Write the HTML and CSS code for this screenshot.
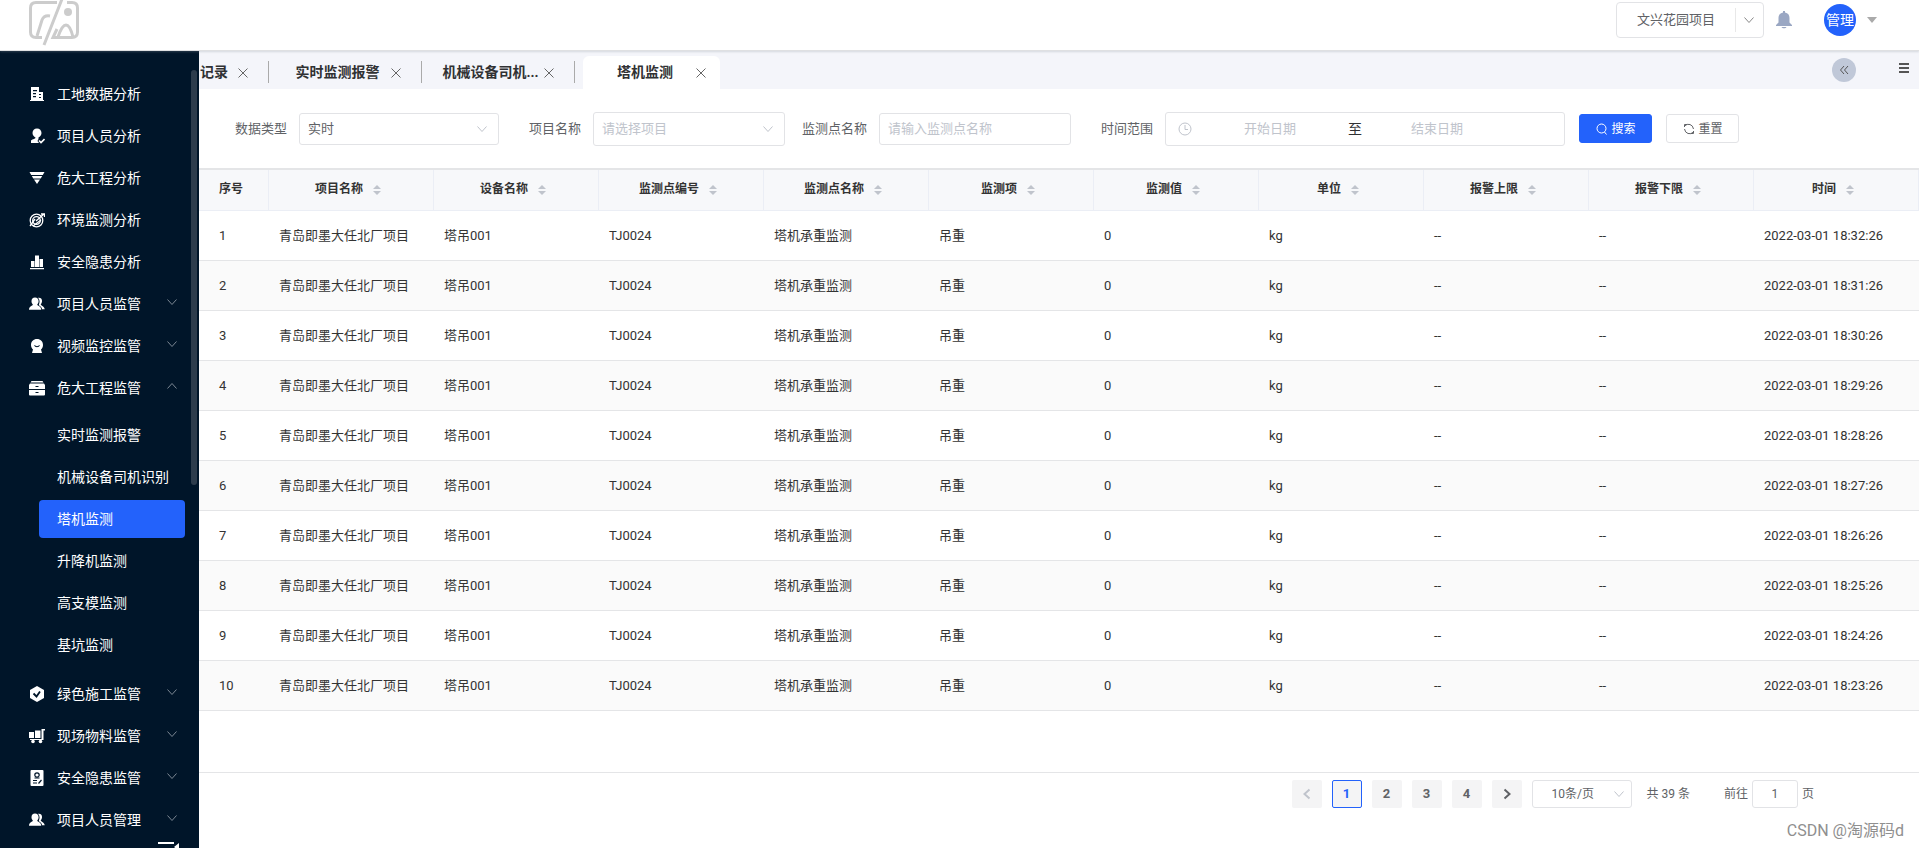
FILE: index.html
```html
<!DOCTYPE html>
<html lang="zh-CN">
<head>
<meta charset="utf-8">
<title>塔机监测</title>
<link rel="stylesheet" href="styles.css">
</head>
<body>
<svg class="sprite" aria-hidden="true">
  <symbol id="down" viewBox="0 0 12 12"><path d="M1.5 3.5 6 8.5 10.5 3.5" fill="none" stroke="currentColor"/></symbol>
  <symbol id="close" viewBox="0 0 12 12"><path d="M1.5 1.5 10.5 10.5M10.5 1.5 1.5 10.5" fill="none" stroke="currentColor"/></symbol>
  <symbol id="sort" viewBox="0 0 8 12"><path d="M0 5 4 1 8 5zM0 7 4 11 8 7z" fill="currentColor"/></symbol>
  <symbol id="people" viewBox="0 0 16 16"><path fill="currentColor" d="M9 1.8c2.8-.4 4.300 1.200 4 3.700-.1 1.200-.6 2-1.300 2.700.2 1.500 3.800 2 4 5.100h-2.600c-.3-2.100-1.500-3-2.900-3.800l-.3-1.100c1-1.700 1.100-4.700-.9-6.600zM6 1.500c2.200 0 3.700 1.500 3.600 3.800 0 1.400-.6 2.300-1.300 3 0 1.900 3.800 1.700 4 5.500H0c.1-3.800 3.800-3.600 3.800-5.500C3 7.600 2.500 6.700 2.500 5.300 2.400 3 3.800 1.500 6 1.500z"/></symbol>
</svg>
<header class="topbar">
  <svg class="logo" viewBox="0 0 50 46" fill="none" stroke="#ccc" stroke-width="3"><path d="M28 2.500H7Q1.500 2.500 1.500 8V32Q1.500 37.500 7 37.500H13M38 2.500H43Q48.500 2.500 48.500 8V32Q48.500 37.500 43 37.500H24L28 29M33 -1 15 45M8 36 13 20Q15 15 21 16M29 37Q33 25 37 25T44 37"/><circle cx="39" cy="12" r="4" fill="#ccc" stroke="none"/></svg>
  <div class="user-tools">
    <button class="project"><span>文兴花园项目</span><i></i><svg width="12" height="12"><use href="#down"/></svg></button>
    <button class="bell" aria-label="通知"><svg width="16" height="18" viewBox="0 0 16 18"><path fill="#9aa7c3" d="M7 0h2v1.500c3 .5 4.500 2.600 4.500 5.500v4.500L16 14v1H0v-1l2.500-2.500V7C2.500 4.100 4 2 7 1.500zM5.500 16h5c-.5 1.800-4.500 1.800-5 0z"/></svg></button>
    <button class="avatar">管理</button>
    <span class="caret"></span>
  </div>
</header>
<div class="shell">
  <aside class="sidebar">
    <nav>
      <a href="#"><svg viewBox="0 0 16 16"><path fill="currentColor" fill-rule="evenodd" d="M2 1h8v5h4v8h1v1H1v-1h1zM4 4v1.300h4V4zm0 3v1.300h3V7zm0 3v1.300h3V10zm6-2v1h2V8zm0 3v1h2v-1z"/></svg>工地数据分析</a>
      <a href="#"><svg viewBox="0 0 16 16"><path fill="currentColor" d="M8 .5c2.700 0 4.500 2 4.500 4.500C12.500 7 11 8.600 9.500 9.500V11l-1 2 1.500 2H2v-2c0-2 4.500-1.500 4.500-3.500C5 8.600 3.500 7 3.500 5 3.500 2.500 5.300.5 8 .5z"/><path fill="none" stroke="currentColor" stroke-width="1.600" d="m10 12.500 2 2 3.500-3.500"/></svg>项目人员分析</a>
      <a href="#"><svg viewBox="0 0 16 16"><path fill="currentColor" d="M.5 2h15l-1.700 3H2.200zM2.800 6h10.400l-1.500 2.500H4.300zM5 9.500h6L8 14z"/></svg>危大工程分析</a>
      <a href="#"><svg viewBox="0 0 16 16" fill="none" stroke="currentColor" stroke-width="1.300"><circle cx="7.500" cy="8.500" r="6.300"/><circle cx="7.500" cy="8.500" r="3.800"/><path d="M7 9 15 2M12 2h3.500v3M1 14 6 7M4 14l8-6"/></svg>环境监测分析</a>
      <a href="#"><svg viewBox="0 0 16 16"><path fill="currentColor" d="M2 7h3.500v6H2zM6 1.500h4V13H6zM10.500 5H14v8h-3.500zM1 14h14v1.200H1z"/></svg>安全隐患分析</a>
      <a href="#"><svg viewBox="0 0 16 16"><use href="#people"/></svg>项目人员监管<svg class="arrow"><use href="#down"/></svg></a>
      <a href="#"><svg viewBox="0 0 16 16"><path fill="currentColor" fill-rule="evenodd" d="M8 1c3.500 0 6 2.500 6 6 0 2-1 3.500-2 4.500l1 3.500H3l1-3.500C3 10.500 2 9 2 7c0-3.500 2.500-6 6-6zM5 7c1 3 5 3 6 0L8 8.300z"/></svg>视频监控监管<svg class="arrow"><use href="#down"/></svg></a>
      <a href="#"><svg viewBox="0 0 16 16"><path fill="currentColor" fill-rule="evenodd" d="M2.500 1h11l1 1.500h-13zM1 3.500h14l1 1.500v4H0V5zM6.500 6v1h3V6zM0 10h16v4.500q0 1-1 1H1q-1 0-1-1zm6.500 2v1h3v-1z"/></svg>危大工程监管<svg class="arrow up"><use href="#down"/></svg></a>
      <div class="submenu">
        <a href="#">实时监测报警</a><a href="#">机械设备司机识别</a><a href="#" class="active">塔机监测</a><a href="#">升降机监测</a><a href="#">高支模监测</a><a href="#">基坑监测</a>
      </div>
      <a href="#"><svg viewBox="0 0 16 16"><path fill="currentColor" d="m8 0 7 4v8l-7 4-7-4V4z"/><path fill="none" stroke="#001529" stroke-width="1.800" d="m4.500 7.500 3 3L11 5.500"/></svg>绿色施工监管<svg class="arrow"><use href="#down"/></svg></a>
      <a href="#"><svg viewBox="0 0 16 16"><path fill="currentColor" d="M0 4h5v6H0zM6 2.500h5.500V10H6zM12.500 1H16v1.500h-1.500V12H1v-1h11.500z"/><circle cx="4" cy="13.500" r="1.800" fill="currentColor"/><circle cx="11.500" cy="13.500" r="1.800" fill="currentColor"/></svg>现场物料监管<svg class="arrow"><use href="#down"/></svg></a>
      <a href="#"><svg viewBox="0 0 16 16"><rect x="1.500" width="13" height="16" rx="1" fill="currentColor"/><path fill="none" stroke="#001529" stroke-width="1.200" d="M4 10.500h4M4 13h4M9.500 13.500l3-3.500M5.500 8h5"/><circle cx="8" cy="5" r="2.200" fill="none" stroke="#001529" stroke-width="1.200"/></svg>安全隐患监管<svg class="arrow"><use href="#down"/></svg></a>
      <a href="#"><svg viewBox="0 0 16 16"><use href="#people"/></svg>项目人员管理<svg class="arrow"><use href="#down"/></svg></a>
    </nav>
    <button class="collapse" aria-label="收起菜单"><svg width="22" height="16" viewBox="0 0 22 16"><path fill="#fff" d="M0 1h16v2H0zM21 2v8l-5-4zM0 7h13v2H0zM0 13h16v2H0z"/></svg></button>
    <span class="scrollbar"></span>
  </aside>
  <main class="content">
    <div class="tabs">
      <div class="tab first"><span>记录</span><button aria-label="关闭"><svg><use href="#close"/></svg></button></div>
      <div class="tab"><span>实时监测报警</span><button aria-label="关闭"><svg><use href="#close"/></svg></button></div>
      <div class="tab"><span>机械设备司机...</span><button aria-label="关闭"><svg><use href="#close"/></svg></button></div>
      <div class="tab current"><span>塔机监测</span><button aria-label="关闭"><svg><use href="#close"/></svg></button></div>
      <div class="tab-tools">
        <button class="round" aria-label="向左"><svg width="10" height="10" viewBox="0 0 10 10"><path fill="none" stroke="#555" d="M5 1 1.500 5 5 9M9 1 5.500 5 9 9"/></svg></button>
        <button class="burger" aria-label="更多"><i></i><i></i><i></i></button>
      </div>
    </div>
    <form class="filters">
      <div class="field type"><label for="type">数据类型</label><select id="type"><option>实时</option></select></div>
      <div class="field proj"><label for="proj">项目名称</label><select id="proj" class="empty tall"><option>请选择项目</option></select></div>
      <div class="field point"><label for="point">监测点名称</label><input id="point" placeholder="请输入监测点名称"></div>
      <div class="field time"><label for="start">时间范围</label>
        <div class="range"><svg width="14" height="14" viewBox="0 0 14 14" fill="none" stroke="#c0c4cc"><circle cx="7" cy="7" r="6"/><path d="M7 3v4.500h3"/></svg><input id="start" placeholder="开始日期"><span>至</span><input class="end" aria-label="结束日期" placeholder="结束日期"></div></div>
      <button type="button" class="btn primary"><svg width="12" height="12" viewBox="0 0 12 12" fill="none" stroke="currentColor"><circle cx="5.500" cy="5.500" r="4.500"/><path d="m8.500 9 2 2.500"/></svg>搜索</button>
      <button type="button" class="btn"><svg width="12" height="12" viewBox="0 0 12 12" fill="none" stroke="currentColor"><path d="M4 1.500H1.500V4M1.500 3Q4 .5 7 1.500T10.500 6M8 10.500h2.500V8M10.500 9Q8 11.500 5 10.500T1.500 6"/></svg>重置</button>
    </form>
    <table>
      <thead><tr><th class="no">序号</th><th>项目名称<svg><use href="#sort"/></svg></th><th>设备名称<svg><use href="#sort"/></svg></th><th>监测点编号<svg><use href="#sort"/></svg></th><th>监测点名称<svg><use href="#sort"/></svg></th><th>监测项<svg><use href="#sort"/></svg></th><th>监测值<svg><use href="#sort"/></svg></th><th>单位<svg><use href="#sort"/></svg></th><th>报警上限<svg><use href="#sort"/></svg></th><th>报警下限<svg><use href="#sort"/></svg></th><th>时间<svg><use href="#sort"/></svg></th></tr></thead>
      <tbody>
        <tr><td>1</td><td>青岛即墨大任北厂项目</td><td>塔吊001</td><td>TJ0024</td><td>塔机承重监测</td><td>吊重</td><td>0</td><td>kg</td><td>--</td><td>--</td><td>2022-03-01 18:32:26</td></tr>
        <tr><td>2</td><td>青岛即墨大任北厂项目</td><td>塔吊001</td><td>TJ0024</td><td>塔机承重监测</td><td>吊重</td><td>0</td><td>kg</td><td>--</td><td>--</td><td>2022-03-01 18:31:26</td></tr>
        <tr><td>3</td><td>青岛即墨大任北厂项目</td><td>塔吊001</td><td>TJ0024</td><td>塔机承重监测</td><td>吊重</td><td>0</td><td>kg</td><td>--</td><td>--</td><td>2022-03-01 18:30:26</td></tr>
        <tr><td>4</td><td>青岛即墨大任北厂项目</td><td>塔吊001</td><td>TJ0024</td><td>塔机承重监测</td><td>吊重</td><td>0</td><td>kg</td><td>--</td><td>--</td><td>2022-03-01 18:29:26</td></tr>
        <tr><td>5</td><td>青岛即墨大任北厂项目</td><td>塔吊001</td><td>TJ0024</td><td>塔机承重监测</td><td>吊重</td><td>0</td><td>kg</td><td>--</td><td>--</td><td>2022-03-01 18:28:26</td></tr>
        <tr><td>6</td><td>青岛即墨大任北厂项目</td><td>塔吊001</td><td>TJ0024</td><td>塔机承重监测</td><td>吊重</td><td>0</td><td>kg</td><td>--</td><td>--</td><td>2022-03-01 18:27:26</td></tr>
        <tr><td>7</td><td>青岛即墨大任北厂项目</td><td>塔吊001</td><td>TJ0024</td><td>塔机承重监测</td><td>吊重</td><td>0</td><td>kg</td><td>--</td><td>--</td><td>2022-03-01 18:26:26</td></tr>
        <tr><td>8</td><td>青岛即墨大任北厂项目</td><td>塔吊001</td><td>TJ0024</td><td>塔机承重监测</td><td>吊重</td><td>0</td><td>kg</td><td>--</td><td>--</td><td>2022-03-01 18:25:26</td></tr>
        <tr><td>9</td><td>青岛即墨大任北厂项目</td><td>塔吊001</td><td>TJ0024</td><td>塔机承重监测</td><td>吊重</td><td>0</td><td>kg</td><td>--</td><td>--</td><td>2022-03-01 18:24:26</td></tr>
        <tr><td>10</td><td>青岛即墨大任北厂项目</td><td>塔吊001</td><td>TJ0024</td><td>塔机承重监测</td><td>吊重</td><td>0</td><td>kg</td><td>--</td><td>--</td><td>2022-03-01 18:23:26</td></tr>
      </tbody>
    </table>
    <footer class="pager">
      <div class="pages">
        <button class="pg" disabled aria-label="上一页"><svg class="prev"><use href="#down"/></svg></button>
        <button class="pg on">1</button><button class="pg">2</button><button class="pg">3</button><button class="pg">4</button>
        <button class="pg" aria-label="下一页"><svg class="next"><use href="#down"/></svg></button>
        <select class="size" aria-label="每页条数"><option>10条/页</option></select>
        <span class="total">共 39 条</span>
        <label class="jump">前往<input value="1">页</label>
      </div>
      <span class="mark">CSDN @淘源码d</span>
    </footer>
  </main>
</div>
</body>
</html>
```
FILE: styles.css
```css
* { box-sizing: border-box; }
body {
  margin: 0;
  height: 100vh;
  display: flex;
  flex-direction: column;
  overflow: hidden;
  font: 13px/20px Roboto, "Noto Sans CJK SC", sans-serif;
  color: #606266;
  background: #fff;
}
button, input, select { font: inherit; color: inherit; margin: 0; }
button { border: 0; padding: 0; background: none; cursor: pointer; }
a { color: inherit; text-decoration: none; }
svg { flex: none; display: block; }
.sprite { position: absolute; width: 0; height: 0; }

.topbar {
  position: relative;
  z-index: 1;
  flex: none;
  height: 51px;
  padding: 0 42px 0 29px;
  display: flex;
  justify-content: space-between;
  align-items: flex-start;
  border-bottom: 1px solid #dfe0e2;
  box-shadow: 0 1px 2px rgba(140, 150, 160, .3);
  background: #fff;
}
.logo { width: 50px; height: 46px; }
.user-tools { display: flex; align-items: center; height: 39px; }
.project {
  width: 148px;
  height: 36px;
  display: flex;
  align-items: center;
  padding-left: 20px;
  border: 1px solid #e2e3e6;
  border-radius: 4px;
}
.project i { width: 1px; height: 24px; margin: 0 7px 0 20px; background: #e8e8e8; }
.project svg { color: #888; }
.bell { margin-left: 12px; }
.avatar {
  width: 32px;
  height: 32px;
  margin: 0 11px 0 32px;
  border-radius: 50%;
  background: #2362fb;
  color: #fff;
  font-size: 14px;
}
.caret { border: 5px solid transparent; border-top: 6px solid #aaa; border-bottom: 0; }

.shell { flex: 1; min-height: 0; display: flex; }
.sidebar {
  position: relative;
  flex: none;
  width: 199px;
  padding-top: 22px;
  overflow: hidden;
  background: #001529;
  color: #fff;
  font-size: 14px;
}
nav a { display: flex; align-items: center; height: 42px; padding-left: 29px; }
nav a svg { width: 16px; height: 16px; margin-right: 12px; }
nav a svg.arrow { width: 12px; height: 12px; margin: 0 21px 4px auto; color: #7c8793; }
nav a svg.up { transform: rotate(180deg); }
.submenu { padding: 3px 14px 5px 39px; }
.submenu a { height: 38px; margin: 4px 0; padding-left: 18px; border-radius: 4px; white-space: nowrap; }
.submenu .active { background: #2362fb; }
.collapse { display: block; margin-left: 158px; }
.scrollbar {
  position: absolute;
  top: 19px;
  right: 2px;
  width: 6px;
  height: 415px;
  border-radius: 3px;
  background: #2d3c4c;
}

.content { flex: 1; min-width: 0; display: flex; flex-direction: column; }
.tabs {
  flex: none;
  height: 38px;
  display: flex;
  align-items: flex-end;
  background: #f4f5fa;
  color: #303133;
  font-size: 14px;
  font-weight: 700;
}
.tab {
  position: relative;
  flex: none;
  width: 153px;
  height: 33px;
  display: flex;
  align-items: center;
  padding-right: 20px;
  white-space: nowrap;
}
.tab span { flex: 1; text-align: center; padding: 0 0 2px 16px; }
.tab svg { width: 12px; height: 12px; color: #666; }
.tab:not(.current)::after {
  content: "";
  position: absolute;
  right: 0;
  top: 5px;
  width: 1px;
  height: 22px;
  background: #aaa;
}
.tab.first { width: 70px; }
.tab.first span { text-align: left; padding-left: 1px; }
.tab.current {
  width: 137px;
  margin-left: 8px;
  padding-right: 13px;
  border-radius: 6px 6px 0 0;
  background: #fff;
}
.tab.current span { padding-left: 12px; }
.tab-tools { margin-left: auto; align-self: center; display: flex; align-items: center; gap: 43px; padding-right: 10px; }
.round { width: 24px; height: 24px; border-radius: 50%; background: #c0c8d8; display: grid; place-items: center; }
.burger { display: grid; gap: 2px; margin-bottom: 4px; }
.burger i { width: 10px; height: 2px; background: #555; }

.filters {
  flex: none;
  height: 79px;
  padding-left: 36px;
  display: flex;
  align-items: center;
}
.field { display: flex; align-items: center; gap: 12px; white-space: nowrap; }
.filters input, .filters select { height: 32px; border: 1px solid #e2e3e6; border-radius: 3px; padding: 0 8px; background-color: #fff; }
select {
  appearance: none;
  background: #fff url("data:image/svg+xml,%3Csvg xmlns='http://www.w3.org/2000/svg' width='12' height='12'%3E%3Cpath d='M1.500 3.500 6 8.500 10.500 3.500' fill='none' stroke='%23c0c4cc'/%3E%3C/svg%3E") no-repeat right 10px center;
}
::placeholder { color: #c0c4cc; opacity: 1; }
.type select { width: 200px; }
.proj { margin-left: 30px; }
.filters .tall { height: 34px; }
.proj select { width: 192px; color: #c0c4cc; }
.point { margin-left: 17px; }
.point input { width: 192px; }
.time { margin-left: 30px; }
.range { width: 400px; height: 34px; display: flex; align-items: center; padding-left: 12px; border: 1px solid #e2e3e6; border-radius: 3px; }
.filters .range input { width: 156px; height: 30px; border: 0; padding: 0; text-align: center; background: none; }
.filters .range .end { width: 150px; }
.range span { width: 14px; font-size: 14px; color: #303133; }
.btn {
  width: 73px;
  height: 29px;
  margin-left: 14px;
  display: flex;
  align-items: center;
  justify-content: center;
  gap: 4px;
  border: 1px solid #e2e3e6;
  border-radius: 3px;
  font-size: 12px;
}
.btn.primary { background: #2362fb; border-color: #2362fb; color: #fff; }

table { flex: none; width: 100%; table-layout: fixed; border-collapse: separate; border-spacing: 0; border-top: 2px solid #e4e5e7; color: #333; }
th {
  height: 41px;
  padding: 0 16px 2px 10px;
  font-size: 12px;
  font-weight: 700;
  background: #f7f8fa;
  border-right: 1px solid #ebeef5;
  border-bottom: 1px solid #ebeef5;
}
th.no { width: 70px; padding: 0 0 2px 20px; text-align: left; }
th svg { display: inline-block; width: 8px; height: 12px; margin-left: 10px; vertical-align: -3px; color: #c0c4cc; }
td { height: 50px; padding: 0 0 0 10px; border-bottom: 1px solid #e4e5e7; white-space: nowrap; }
td:first-child { padding-left: 20px; }
tbody tr:nth-child(even) { background: #fafafa; }

.pager { margin-top: auto; padding: 7px 15px 6px 0; border-top: 1px solid #e4e5e7; display: flex; flex-direction: column; align-items: flex-end; gap: 12px; }
.pages { display: flex; align-items: center; gap: 10px; padding-right: 90px; font-size: 12px; }
.pg { width: 30px; height: 28px; display: grid; place-items: center; border-radius: 2px; background: #f4f4f5; font-size: 13px; font-weight: 700; }
.pg svg { width: 12px; height: 12px; stroke-width: 2; }
.pg .prev { transform: rotate(90deg); }
.pg .next { transform: rotate(-90deg); }
.pg:disabled { color: #c0c4cc; }
.pg.on { border: 1px solid #2362fb; color: #2362fb; }
.size { width: 100px; height: 28px; padding: 0 19px; border: 1px solid #e2e3e6; border-radius: 3px; background-position: right 6px center; }
.total { margin: 0 24px 0 5px; }
.jump { display: flex; align-items: center; gap: 4px; }
.jump input { width: 46px; height: 28px; border: 1px solid #e2e3e6; border-radius: 3px; text-align: center; }
.mark { font-size: 16px; line-height: 22px; color: #8f8f8f; }
```
